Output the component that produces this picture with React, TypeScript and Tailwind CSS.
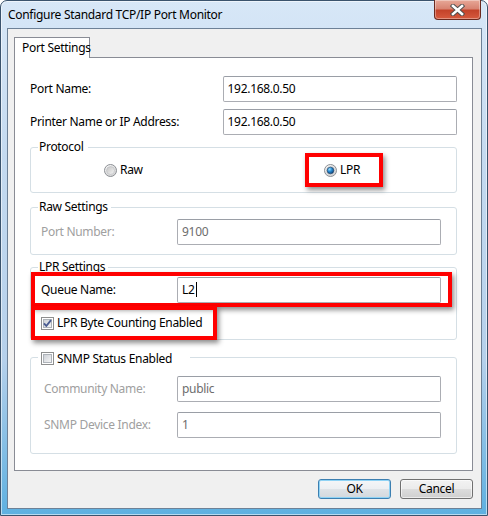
import React from 'react';

const uiFont = "font-['Noto_Sans','DejaVu_Sans',sans-serif]";

const TextBox = ({ value, width, disabled, caret }: { value: string; width: string; disabled?: boolean; caret?: boolean }) => {
  return (
    <div
      className={`flex h-[26px] ${width} items-center rounded-[2px] border border-[#abadb3] border-t-[#9a9ea6] bg-white px-[4px] text-[12px] ${
        disabled ? 'text-[#6d6d6d]' : 'text-black'
      }`}
    >
      {value}
      {caret && <span className="ml-[1px] h-[15px] w-px bg-black" />}
    </div>
  );
};

const Radio = ({ id, checked }: { id: string; checked?: boolean }) => (
  <svg width="13" height="13" viewBox="0 0 13 13" className="shrink-0">
    <defs>
      <radialGradient id={`${id}-ring`} cx="0.35" cy="0.3" r="0.8">
        <stop offset="0" stopColor="#ffffff" />
        <stop offset="1" stopColor="#cfcfcf" />
      </radialGradient>
      <linearGradient id={`${id}-in`} x1="0" y1="0" x2="1" y2="1">
        <stop offset="0" stopColor="#c4c4c4" />
        <stop offset="1" stopColor="#f4f4f4" />
      </linearGradient>
      <radialGradient id={`${id}-dot`} cx="0.35" cy="0.3" r="0.75">
        <stop offset="0" stopColor="#9ee0ff" />
        <stop offset="0.45" stopColor="#2a8fd6" />
        <stop offset="1" stopColor="#0b3e75" />
      </radialGradient>
    </defs>
    <circle cx="6.5" cy="6.5" r="6" fill={`url(#${id}-ring)`} stroke="#8c8f94" />
    <circle cx="6.5" cy="6.5" r="4" fill={`url(#${id}-in)`} stroke="#b8bbbf" strokeWidth="0.6" />
    {checked && <circle cx="6.5" cy="6.5" r="3.3" fill={`url(#${id}-dot)`} stroke="#1c3e63" strokeWidth="0.6" />}
  </svg>
);

const Check = ({ id, checked }: { id: string; checked?: boolean }) => (
  <svg width="13" height="13" viewBox="0 0 13 13" className="shrink-0">
    <defs>
      <linearGradient id={`${id}-g`} x1="0" y1="0" x2="1" y2="1">
        <stop offset="0" stopColor="#cbcfd5" />
        <stop offset="1" stopColor="#f7f7f7" />
      </linearGradient>
    </defs>
    <rect x="0.5" y="0.5" width="12" height="12" fill="#ffffff" stroke="#8e8f8f" />
    <rect x="2.5" y="2.5" width="8" height="8" fill={`url(#${id}-g)`} stroke="#aeb3b9" />
    {checked && (
      <path d="M3 6.3 L5.3 9 L10 3.2" fill="none" stroke="#4a5c92" strokeWidth="1.9" strokeLinejoin="round" />
    )}
  </svg>
);

const RedBox = ({ className, children }: { className: string; children: React.ReactNode }) => (
  <div className={`relative flex items-center border-4 border-[#ff0000] shadow-[2px_3px_5px_rgba(0,0,0,0.45)] ${className}`}>
    {children}
  </div>
);

const CloseButton = () => (
  <div className="-mt-px mr-px flex h-[20px] w-[47px] items-center justify-center rounded-b-[4px] border border-t-0 border-[#6b2a1f] bg-[linear-gradient(#e7a898_0%,#d88472_45%,#c4432a_55%,#d65a3e_100%)] shadow-[inset_0_0_0_1px_rgba(255,255,255,0.35)]">
    <svg width="15" height="12" viewBox="0 0 15 12">
      <path d="M3 2 L12 10 M12 2 L3 10" stroke="#4d4d4d" strokeWidth="4.4" strokeLinecap="square" />
      <path d="M3 2 L12 10 M12 2 L3 10" stroke="#ffffff" strokeWidth="2.6" strokeLinecap="square" />
    </svg>
  </div>
);

const App = () => {
  return (
    <div className={`${uiFont} h-[516px] w-[488px] whitespace-nowrap text-[12px] leading-[16px] tracking-[-0.3px] text-black`}>
      <div className="flex h-[516px] w-[488px] flex-col rounded-t-[7px] border border-[#3a536d] bg-[linear-gradient(#d7e7f7_0%,#c4daf0_30%,#b5d0eb_70%,#5eb0e0_100%)] pb-[6px] pl-[6px] pr-[5px] shadow-[inset_0_0_0_1px_rgba(255,255,255,0.55)]">
        {/* title bar */}
        <div className="flex h-[27px] items-start justify-between">
          <div className="pl-[1px] pt-[6px] text-[12px] text-black">Configure Standard TCP/IP Port Monitor</div>
          <CloseButton />
        </div>

        {/* client area */}
        <div className="flex flex-col border border-[#6d8197] bg-[#f0f0f0] pb-[9px] pl-[6px] pr-[8px] pt-[8px]">
          <div className="relative z-10 -mb-px flex h-[21px] w-[76px] items-center border border-b-0 border-[#898c95] bg-white pl-[7px]">
            Port Settings
          </div>

          <div className="flex h-[414px] flex-col border border-[#898c95] bg-white px-[15px] pt-[18px]">
            <div className="flex items-center">
              <span className="w-[193px]">Port Name:</span>
              <TextBox value="192.168.0.50" width="w-[235px]" />
            </div>
            <div className="mt-[7px] flex items-center">
              <span className="w-[193px]">Printer Name or IP Address:</span>
              <TextBox value="192.168.0.50" width="w-[235px]" />
            </div>

            {/* Protocol */}
            <fieldset className="mt-[4px] rounded-[3px] border border-[#d5dfe5] pb-[5px]">
              <legend className="ml-[7px] pl-[1px] pr-[4px] leading-[16px]">Protocol</legend>
              <div className="-mt-[2px] flex items-center">
                <div className="ml-[73px] flex w-[201px] items-center gap-[3px]">
                  <Radio id="raw" />
                  <span>Raw</span>
                </div>
                <RedBox className="h-[34px] w-[78px] gap-[3px] pl-[15px]">
                  <Radio id="lpr" checked />
                  <span>LPR</span>
                </RedBox>
              </div>
            </fieldset>

            {/* Raw Settings */}
            <fieldset className="mt-[6px] rounded-[3px] border border-[#d5dfe5] pb-[9px] pt-[4px]">
              <legend className="ml-[7px] pl-[1px] pr-[3px] leading-[16px]">Raw Settings</legend>
              <div className="flex items-center pl-[10px]">
                <span className="w-[136px] text-[#a0a0a0]">Port Number:</span>
                <TextBox value="9100" width="w-[264px]" disabled />
              </div>
            </fieldset>

            {/* LPR Settings */}
            <fieldset className="mt-[4px] rounded-[3px] border border-[#d5dfe5]">
              <legend className="ml-[7px] pl-[1px] pr-[3px] leading-[16px]">LPR Settings</legend>
              <RedBox className="-mt-[3px] h-[35px] w-[421px] pl-[6px]">
                <span className="w-[136px]">Queue Name:</span>
                <TextBox value="L2" width="w-[264px]" caret />
              </RedBox>
              <RedBox className="-mb-px -mt-px h-[34px] w-[186px] gap-[3px] pl-[6px]">
                <Check id="byte" checked />
                <span>LPR Byte Counting Enabled</span>
              </RedBox>
            </fieldset>

            {/* SNMP */}
            <fieldset className="mt-[9px] rounded-[3px] border border-[#d5dfe5] pb-[15px] pt-[11px]">
              <legend className="ml-[7px] flex h-[16px] w-[152px] items-center gap-[3px] pl-[3px] pt-[3px]">
                <Check id="snmp" />
                <span>SNMP Status Enabled</span>
              </legend>
              <div className="flex items-center pl-[13px]">
                <span className="w-[133px] text-[#a0a0a0]">Community Name:</span>
                <TextBox value="public" width="w-[264px]" disabled />
              </div>
              <div className="mt-[10px] flex items-center pl-[13px]">
                <span className="w-[133px] text-[#a0a0a0]">SNMP Device Index:</span>
                <TextBox value="1" width="w-[264px]" disabled />
              </div>
            </fieldset>
          </div>

          <div className="mt-[8px] flex justify-end gap-[9px]">
            <button className="h-[20px] w-[73px] rounded-[3px] border border-[#3c7fb1] bg-[linear-gradient(#f4f6f8_0%,#eceff2_50%,#dfe3e7_50%,#d3d8dd_100%)] text-[12px] shadow-[inset_0_0_0_1px_#8fd3f5]">
              OK
            </button>
            <button className="h-[20px] w-[73px] rounded-[3px] border border-[#707070] bg-[linear-gradient(#f2f2f2_0%,#ebebeb_50%,#dddddd_50%,#cfcfcf_100%)] text-[12px] shadow-[inset_0_0_0_1px_rgba(255,255,255,0.6)]">
              Cancel
            </button>
          </div>
        </div>
      </div>
    </div>
  );
};

export default App;
